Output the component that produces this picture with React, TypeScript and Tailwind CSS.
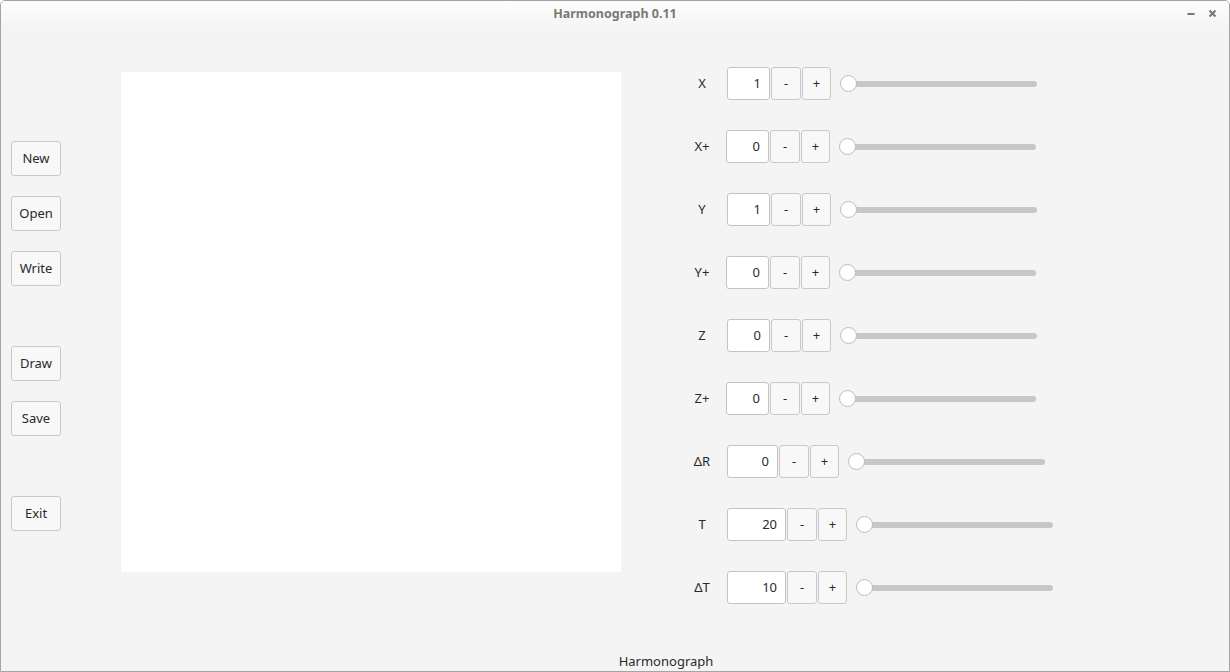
import React from 'react';

interface Param {
  label: string;
  value: number;
  inputW: string;
  shift: string;
}

const params: Param[] = [
  { label: 'X', value: 1, inputW: 'w-[43px]', shift: 'ml-[3px]' },
  { label: 'X+', value: 0, inputW: 'w-[43px]', shift: 'ml-[2px]' },
  { label: 'Y', value: 1, inputW: 'w-[43px]', shift: 'ml-[3px]' },
  { label: 'Y+', value: 0, inputW: 'w-[43px]', shift: 'ml-[2px]' },
  { label: 'Z', value: 0, inputW: 'w-[43px]', shift: 'ml-[3px]' },
  { label: 'Z+', value: 0, inputW: 'w-[43px]', shift: 'ml-[2px]' },
  { label: 'ΔR', value: 0, inputW: 'w-[51px]', shift: 'ml-[3px]' },
  { label: 'T', value: 20, inputW: 'w-[59px]', shift: 'ml-[3px]' },
  { label: 'ΔT', value: 10, inputW: 'w-[59px]', shift: 'ml-[3px]' },
];

const SideButton: React.FC<{ label: string; className?: string }> = ({ label, className = '' }) => (
  <button className={`w-[50px] h-[35px] bg-[#f8f8f8] border border-[#c9c9c9] rounded-[3px] text-[13px] text-[#2a2a2a] ${className}`}>
    {label}
  </button>
);

const ParamRow: React.FC<{ p: Param }> = ({ p }) => (
  <div className="flex items-center h-[33px]">
    <span className="w-[44px] text-center text-[13px] text-[#2a2a2a]">{p.label}</span>
    <div className={`flex items-stretch gap-px h-[33px] ${p.shift}`}>
      <div className={`${p.inputW} bg-white border border-[#c3c3c3] rounded-[3px] flex items-center justify-end pr-[8px] text-[13px] text-[#2a2a2a]`}>
        {p.value}
      </div>
      <button className="w-[30px] bg-[#f8f8f8] border border-[#c9c9c9] rounded-[3px] text-[13px] text-[#2a2a2a]">-</button>
      <button className="w-[29px] bg-[#f8f8f8] border border-[#c9c9c9] rounded-[3px] text-[13px] text-[#2a2a2a]">+</button>
    </div>
    <div className="relative ml-[9px] w-[197px] h-[17px] flex items-center">
      <div className="absolute left-[8px] right-0 h-[6px] rounded-full bg-[#c7c7c7]" />
      <div className="absolute left-0 top-0 w-[17px] h-[17px] rounded-full bg-white border border-[#bcbcbc]" />
    </div>
  </div>
);

export default function App() {
  return (
    <div
      className="w-[1230px] h-[672px] box-border border border-[#a4a4a4] rounded-t-[5px] bg-[#f4f4f4] flex flex-col overflow-hidden"
      style={{ fontFamily: '"Noto Sans", "Open Sans", sans-serif' }}
    >
      <div className="relative h-[28px] shrink-0 bg-gradient-to-b from-[#fdfdfd] to-[#f4f4f4] flex items-center justify-center">
        <span className="text-[12.5px] font-bold text-[#7c7772] -mt-[2px]">Harmonograph 0.11</span>
        <svg className="absolute left-[1186px] top-[10px]" width="9" height="6" viewBox="0 0 9 6">
          <rect x="0.5" y="2" width="7" height="2" fill="#777" />
        </svg>
        <svg className="absolute left-[1207px] top-[8px]" width="9" height="9" viewBox="0 0 9 9">
          <path d="M1.5 1.5 L7.5 7.5 M7.5 1.5 L1.5 7.5" stroke="#777" strokeWidth="2" />
        </svg>
      </div>

      <div className="flex flex-1">
        <div className="flex flex-col pl-[10px] pt-[112px] w-[61px] shrink-0">
          <SideButton label="New" />
          <SideButton label="Open" className="mt-[20px]" />
          <SideButton label="Write" className="mt-[20px]" />
          <SideButton label="Draw" className="mt-[60px]" />
          <SideButton label="Save" className="mt-[20px]" />
          <SideButton label="Exit" className="mt-[60px]" />
        </div>

        <div className="ml-[59px] mt-[43px] w-[500px] h-[500px] bg-white shrink-0" />

        <div className="ml-[59px] mt-[38px] flex flex-col gap-[30px]">
          {params.map(p => (
            <ParamRow key={p.label} p={p} />
          ))}
        </div>
      </div>

      <div className="h-[21px] shrink-0 flex justify-center pl-[102px]">
        <span className="text-[13px] leading-[18px] mt-[2px] text-[#2a2a2a]">Harmonograph</span>
      </div>
    </div>
  );
}
